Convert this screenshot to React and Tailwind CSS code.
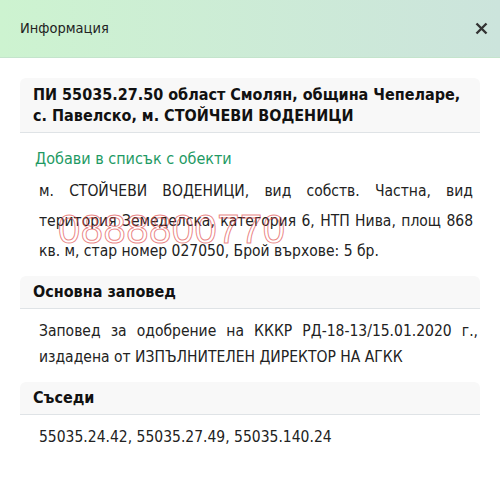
import React from "react";

const SectionTitle = ({ children }) => (
  <div className="rounded-t-md bg-[#f8f8f8] border-b border-[#dfe3e6] px-[13px] py-[6px] font-bold text-[16px] leading-[20px] text-[#111]">
    {children}
  </div>
);

const App = () => {
  return (
    <div
      className="w-[500px] h-[482px] bg-white text-[#222] text-[15.5px] overflow-hidden"
      style={{ fontFamily: "'DejaVu Sans Condensed', Tahoma, sans-serif" }}
    >
      <div className="h-[58px] flex items-center justify-between pl-5 pr-3 border-b border-[#c4e4cc] bg-gradient-to-r from-[#cdf3d0] to-[#cce4dc]">
        <span className="text-[14.5px] text-[#222]">Информация</span>
        <svg width="13" height="13" viewBox="0 0 13 13">
          <path d="M1.5 1.5 L11.5 11.5 M11.5 1.5 L1.5 11.5" stroke="#333" strokeWidth="2.4" />
        </svg>
      </div>

      <div className="px-5 pt-5">
        <div className="rounded-t-md bg-[#f8f8f8] border-b border-[#dfe3e6] px-[13px] py-[6px] font-bold text-[16px] leading-[21px] text-[#111]">
          ПИ 55035.27.50 област Смолян, община Чепеларе, с. Павелско, м. СТОЙЧЕВИ ВОДЕНИЦИ
        </div>

        <div className="pl-[15px] pt-[16px] text-[16px] text-[#1e9a64] leading-[20px]">
          Добави в списък с обекти
        </div>

        <div className="relative pl-[19px] pr-[7px] pt-[7px] pb-[10px] leading-[30px] text-justify">
          м. СТОЙЧЕВИ ВОДЕНИЦИ, вид собств. Частна, вид територия Земеделска, категория 6, НТП Нива, площ 868 кв. м, стар номер 027050, Брой върхове: 5 бр.
          <span
            className="absolute left-[38px] top-[40px] text-[40px] leading-none text-transparent tracking-[0.5px] [-webkit-text-stroke:1px_rgba(225,80,80,0.7)]"
            style={{ fontFamily: "'Liberation Sans', Arial, sans-serif" }}
          >
            0888800770
          </span>
        </div>

        <SectionTitle>Основна заповед</SectionTitle>
        <div className="pl-[19px] pr-[2px] pt-[9px] pb-[12px] leading-[26px] text-justify">
          Заповед за одобрение на КККР РД-18-13/15.01.2020 г., издадена от ИЗПЪЛНИТЕЛЕН ДИРЕКТОР НА АГКК
        </div>

        <SectionTitle>Съседи</SectionTitle>
        <div className="pl-[19px] pt-[9px] leading-[26px]">
          55035.24.42, 55035.27.49, 55035.140.24
        </div>
      </div>
    </div>
  );
};

export default App;
